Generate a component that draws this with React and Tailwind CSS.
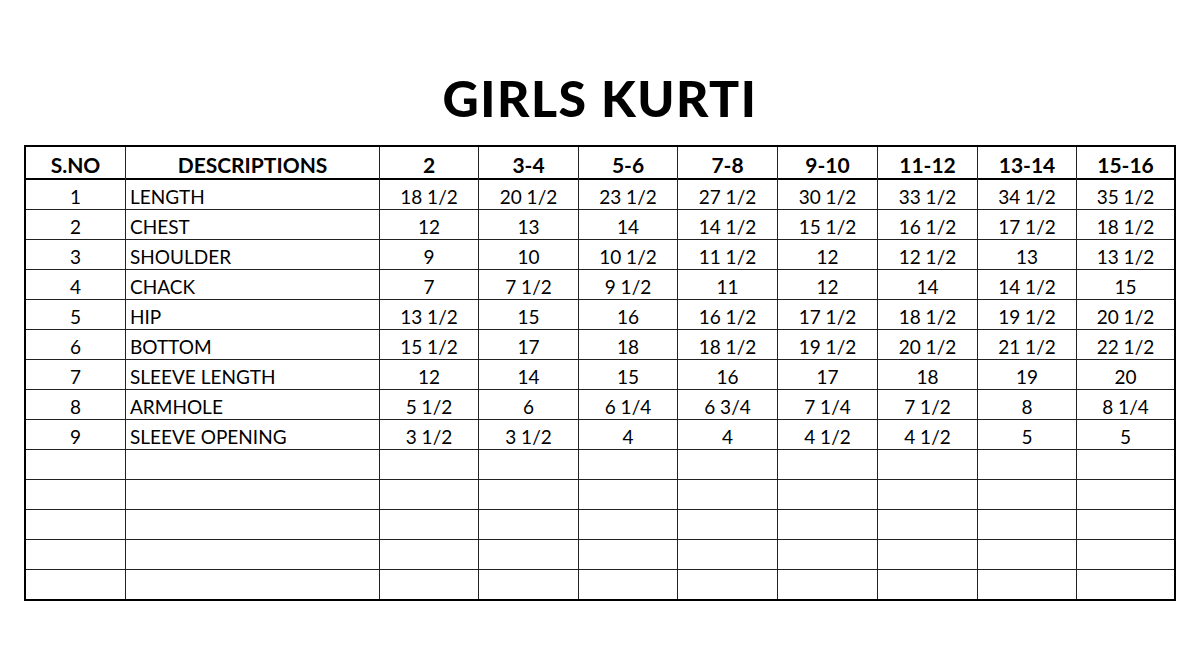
import React from "react";

const cols = ["2", "3-4", "5-6", "7-8", "9-10", "11-12", "13-14", "15-16"];
const rows = [
  ["1", "LENGTH", "18 1/2", "20 1/2", "23 1/2", "27 1/2", "30 1/2", "33 1/2", "34 1/2", "35 1/2"],
  ["2", "CHEST", "12", "13", "14", "14 1/2", "15 1/2", "16 1/2", "17 1/2", "18 1/2"],
  ["3", "SHOULDER", "9", "10", "10 1/2", "11 1/2", "12", "12 1/2", "13", "13 1/2"],
  ["4", "CHACK", "7", "7 1/2", "9 1/2", "11", "12", "14", "14 1/2", "15"],
  ["5", "HIP", "13 1/2", "15", "16", "16 1/2", "17 1/2", "18 1/2", "19 1/2", "20 1/2"],
  ["6", "BOTTOM", "15 1/2", "17", "18", "18 1/2", "19 1/2", "20 1/2", "21 1/2", "22 1/2"],
  ["7", "SLEEVE LENGTH", "12", "14", "15", "16", "17", "18", "19", "20"],
  ["8", "ARMHOLE", "5 1/2", "6", "6 1/4", "6 3/4", "7 1/4", "7 1/2", "8", "8 1/4"],
  ["9", "SLEEVE OPENING", "3 1/2", "3 1/2", "4", "4", "4 1/2", "4 1/2", "5", "5"],
  ["", "", "", "", "", "", "", "", "", ""],
  ["", "", "", "", "", "", "", "", "", ""],
  ["", "", "", "", "", "", "", "", "", ""],
  ["", "", "", "", "", "", "", "", "", ""],
  ["", "", "", "", "", "", "", "", "", ""],
];

export default function App() {
  return (
    <div className="w-[1200px] h-[662px] bg-white flex flex-col items-center" style={{ fontFamily: "Lato, 'Open Sans', sans-serif" }}>
      <div className="h-[145px] w-full flex items-end justify-center pb-[22px]">
        <h1 className="text-[50px] font-black leading-none text-black tracking-[1.5px]">GIRLS KURTI</h1>
      </div>
      <div className="w-[1152px] border-2 border-black">
        <div className="grid grid-cols-[100px_254px_99px_100px_99px_100px_100px_100px_99px_97px] h-[33px] border-b-2 border-black">
          {["S.NO", "DESCRIPTIONS", ...cols].map((h, i) => (
            <div
              key={i}
              className={`flex items-center justify-center pt-[2px] font-bold text-[21px] text-black ${i < 9 ? "border-r border-[#222]" : ""}`}
            >
              {h}
            </div>
          ))}
        </div>
        {rows.map((r, ri) => (
          <div
            key={ri}
            className={`grid grid-cols-[100px_254px_99px_100px_99px_100px_100px_100px_99px_97px] ${ri < rows.length - 1 ? "h-[30px] border-b border-[#222]" : "h-[29px]"}`}
          >
            {r.map((c, ci) => (
              <div
                key={ci}
                className={`flex items-center pt-[3px] text-[19px] text-black ${ci === 1 ? "justify-start pl-[4px]" : "justify-center"} ${ci < 9 ? "border-r border-[#222]" : ""}`}
              >
                {c}
              </div>
            ))}
          </div>
        ))}
      </div>
    </div>
  );
}
